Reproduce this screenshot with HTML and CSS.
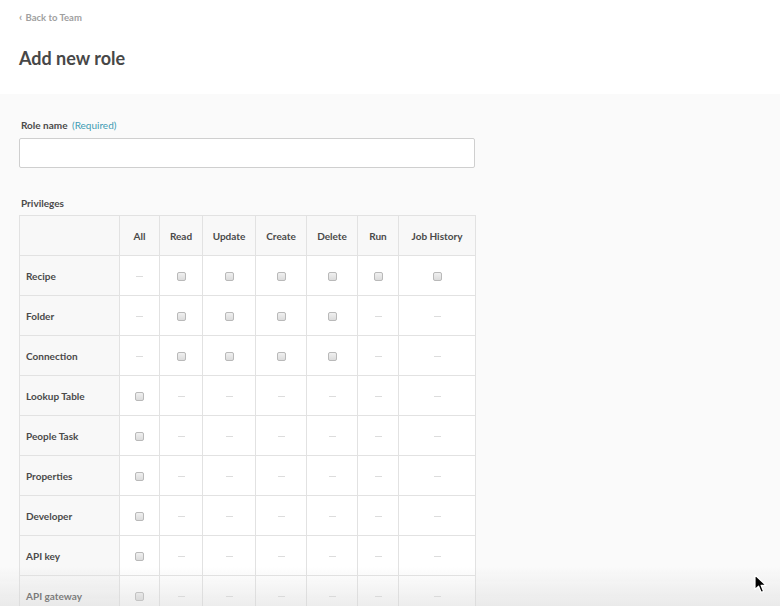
FILE: index.html
```html
<!DOCTYPE html>
<html>
<head>
<meta charset="utf-8">
<link rel="stylesheet" href="styles.css">
</head>
<body>
<header class="top">
  <a class="back" href="#"><span class="chev">‹</span> Back to Team</a>
  <h1 class="title">Add new role</h1>
</header>
<main class="panel">
  <div class="field">
    <label class="label">Role name <span class="req">(Required)</span></label>
    <input class="input" type="text">
  </div>
  <div class="label priv">Privileges</div>
  <table class="grid">
    <colgroup>
      <col class="c0"><col class="c1"><col class="c2"><col class="c3"><col class="c4"><col class="c5"><col class="c6"><col class="c7">
    </colgroup>
    <thead>
      <tr><th class="corner"></th><th>All</th><th>Read</th><th>Update</th><th>Create</th><th>Delete</th><th>Run</th><th>Job History</th></tr>
    </thead>
    <tbody>
      <tr><th class="rh">Recipe</th><td><i class="dash"></i></td><td><i class="cb"></i></td><td><i class="cb"></i></td><td><i class="cb"></i></td><td><i class="cb"></i></td><td><i class="cb"></i></td><td><i class="cb"></i></td></tr>
      <tr><th class="rh">Folder</th><td><i class="dash"></i></td><td><i class="cb"></i></td><td><i class="cb"></i></td><td><i class="cb"></i></td><td><i class="cb"></i></td><td><i class="dash"></i></td><td><i class="dash"></i></td></tr>
      <tr><th class="rh">Connection</th><td><i class="dash"></i></td><td><i class="cb"></i></td><td><i class="cb"></i></td><td><i class="cb"></i></td><td><i class="cb"></i></td><td><i class="dash"></i></td><td><i class="dash"></i></td></tr>
      <tr><th class="rh">Lookup Table</th><td><i class="cb"></i></td><td><i class="dash"></i></td><td><i class="dash"></i></td><td><i class="dash"></i></td><td><i class="dash"></i></td><td><i class="dash"></i></td><td><i class="dash"></i></td></tr>
      <tr><th class="rh">People Task</th><td><i class="cb"></i></td><td><i class="dash"></i></td><td><i class="dash"></i></td><td><i class="dash"></i></td><td><i class="dash"></i></td><td><i class="dash"></i></td><td><i class="dash"></i></td></tr>
      <tr><th class="rh">Properties</th><td><i class="cb"></i></td><td><i class="dash"></i></td><td><i class="dash"></i></td><td><i class="dash"></i></td><td><i class="dash"></i></td><td><i class="dash"></i></td><td><i class="dash"></i></td></tr>
      <tr><th class="rh">Developer</th><td><i class="cb"></i></td><td><i class="dash"></i></td><td><i class="dash"></i></td><td><i class="dash"></i></td><td><i class="dash"></i></td><td><i class="dash"></i></td><td><i class="dash"></i></td></tr>
      <tr><th class="rh">API key</th><td><i class="cb"></i></td><td><i class="dash"></i></td><td><i class="dash"></i></td><td><i class="dash"></i></td><td><i class="dash"></i></td><td><i class="dash"></i></td><td><i class="dash"></i></td></tr>
      <tr><th class="rh">API gateway</th><td><i class="cb"></i></td><td><i class="dash"></i></td><td><i class="dash"></i></td><td><i class="dash"></i></td><td><i class="dash"></i></td><td><i class="dash"></i></td><td><i class="dash"></i></td></tr>
    </tbody>
  </table>
</main>
<div class="shade"></div>
<svg class="cursor" width="14" height="20" viewBox="0 0 14 20">
  <path d="M1 1 L1 15.5 L4.6 12.2 L7.2 18.4 L9.6 17.4 L7.1 11.3 L12 11.3 Z" fill="#000" stroke="#fff" stroke-width="1.2" stroke-linejoin="round"/>
</svg>
</body>
</html>
```
FILE: styles.css
```css
html, body {
  margin: 0;
  padding: 0;
  height: 100%;
  overflow: hidden;
}
body {
  font-family: Lato, "Open Sans", "Liberation Sans", sans-serif;
  background: #fafafa;
  color: #444;
}
.top {
  background: #fff;
  padding: 10px 19px 0;
  height: 84px;
  box-sizing: content-box;
}
.back {
  display: block;
  font-size: 9.5px;
  font-weight: 700;
  color: #a0a0a0;
  text-decoration: none;
  line-height: 14px;
}
.chev {
  font-size: 11px;
  margin-right: 1px;
}
.title {
  margin: 21px 0 0;
  font-size: 18px;
  font-weight: 700;
  color: #474747;
  line-height: 24px;
}
.panel {
  padding: 24px 19px 0;
}
.label {
  display: block;
  font-size: 10px;
  font-weight: 700;
  color: #4a4a4a;
  line-height: 14px;
  padding-left: 2px;
}
.req {
  color: #3c9bb3;
  font-weight: 400;
  margin-left: 2px;
}
.input {
  display: block;
  margin-top: 6px;
  width: 456px;
  height: 30px;
  box-sizing: border-box;
  border: 1px solid #cfcfcf;
  border-radius: 2px;
  background: #fff;
}
.priv {
  margin-top: 28px;
}
.grid {
  margin-top: 5px;
  border-collapse: collapse;
  table-layout: fixed;
  width: 456px;
  font-size: 10px;
}
.c0 { width: 100px; }
.c1 { width: 40px; }
.c2 { width: 43px; }
.c3 { width: 53px; }
.c4 { width: 51px; }
.c5 { width: 51px; }
.c6 { width: 41px; }
.c7 { width: 77px; }
.grid th, .grid td {
  border: 1px solid #e2e2e2;
  height: 39px;
  padding: 0;
  text-align: center;
  vertical-align: middle;
}
.grid thead th {
  background: #f8f8f8;
  font-weight: 700;
  color: #4a4a4a;
}
.grid td {
  background: #fff;
}
.grid .rh {
  background: #f8f8f8;
  text-align: left;
  padding-left: 6px;
  font-weight: 700;
  color: #4a4a4a;
}
.cb {
  display: inline-block;
  width: 7px;
  height: 7px;
  border: 1px solid #b9b9b9;
  border-radius: 2px;
  background: linear-gradient(#f0f0f0, #dcdcdc);
  vertical-align: middle;
}
.dash {
  display: inline-block;
  width: 7px;
  height: 1px;
  background: #dcdcdc;
  vertical-align: middle;
}
.shade {
  position: fixed;
  left: 0;
  right: 0;
  bottom: 0;
  height: 40px;
  background: linear-gradient(rgba(230,230,230,0), rgba(215,215,215,0.45));
  pointer-events: none;
}
.cursor {
  position: fixed;
  left: 754px;
  top: 574px;
}
```
